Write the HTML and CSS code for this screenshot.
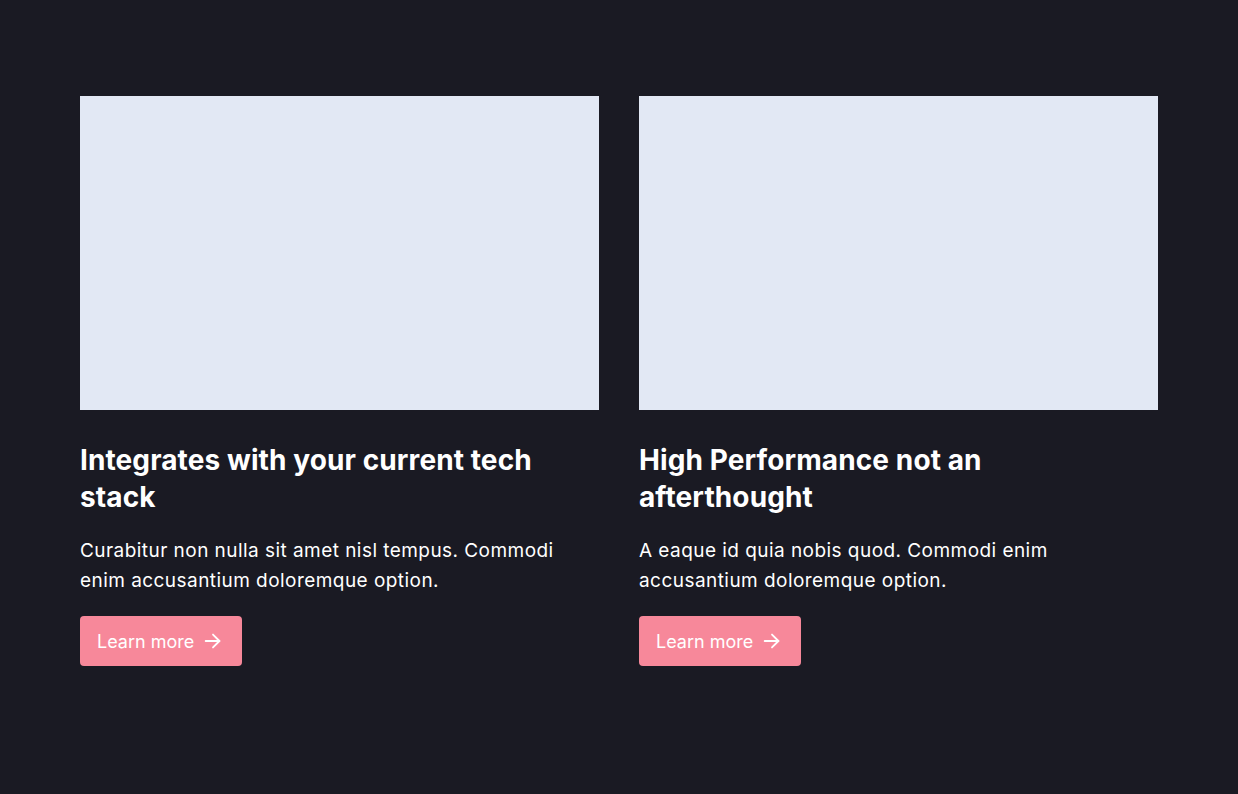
FILE: index.html
```html
<!DOCTYPE html>
<html lang="en">
<head>
<meta charset="utf-8">
<title>Features</title>
<link rel="stylesheet" href="styles.css">
</head>
<body>
<section class="features">
  <article class="card">
    <div class="media"></div>
    <h2 class="title">Integrates with your current tech stack</h2>
    <p class="text">Curabitur non nulla sit amet nisl tempus. Commodi enim accusantium doloremque option.</p>
    <a class="btn" href="#">Learn more
      <svg class="arrow" viewBox="0 0 24 24" width="22" height="22" fill="none" stroke="currentColor" stroke-width="2" stroke-linecap="round" stroke-linejoin="round"><path d="M4 12h15"/><path d="M12 5l7 7-7 7"/></svg>
    </a>
  </article>
  <article class="card">
    <div class="media"></div>
    <h2 class="title">High Performance not an afterthought</h2>
    <p class="text">A eaque id quia nobis quod. Commodi enim accusantium doloremque option.</p>
    <a class="btn" href="#">Learn more
      <svg class="arrow" viewBox="0 0 24 24" width="22" height="22" fill="none" stroke="currentColor" stroke-width="2" stroke-linecap="round" stroke-linejoin="round"><path d="M4 12h15"/><path d="M12 5l7 7-7 7"/></svg>
    </a>
  </article>
</section>
</body>
</html>
```
FILE: styles.css
```css
* { box-sizing: border-box; }
html, body { margin: 0; padding: 0; }
body {
  background: #1a1a23;
  color: #ffffff;
  font-family: Inter, "Noto Sans", sans-serif;
  min-height: 794px;
}
.features {
  display: grid;
  grid-template-columns: 1fr 1fr;
  gap: 40px;
  padding: 96px 80px;
}
.card {
  display: flex;
  flex-direction: column;
  align-items: flex-start;
}
.media {
  width: 100%;
  height: 314px;
  background: #e2e8f4;
}
.title {
  margin: 32px 0 0;
  font-size: 28px;
  line-height: 37px;
  font-weight: 700;
  letter-spacing: 0.1px;
  padding-right: 40px;
}
.text {
  margin: 20px 0 0;
  font-size: 19px;
  line-height: 30px;
  letter-spacing: 0.45px;
  padding-right: 30px;
}
.btn {
  margin-top: 20px;
  display: inline-flex;
  align-items: center;
  gap: 8px;
  height: 50px;
  padding: 0 18px 0 17px;
  background: #f7889a;
  color: #ffffff;
  border-radius: 4px;
  text-decoration: none;
  font-size: 18px;
}
.arrow { display: block; }
```
